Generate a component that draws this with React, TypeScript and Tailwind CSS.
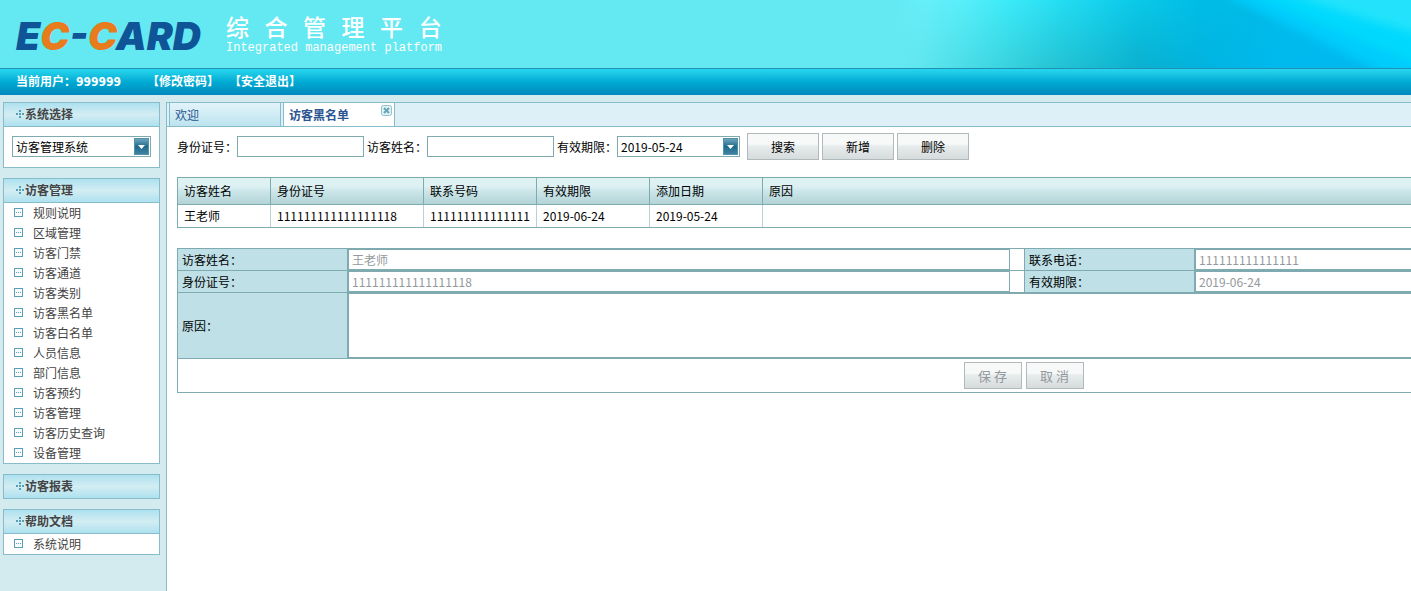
import { useState } from 'react'

const visitorMenu = [
  '规则说明',
  '区域管理',
  '访客门禁',
  '访客通道',
  '访客类别',
  '访客黑名单',
  '访客白名单',
  '人员信息',
  '部门信息',
  '访客预约',
  '访客管理',
  '访客历史查询',
  '设备管理',
]

const columns = [
  { title: '访客姓名', width: 'w-[93px]' },
  { title: '身份证号', width: 'w-[153px]' },
  { title: '联系号码', width: 'w-[113px]' },
  { title: '有效期限', width: 'w-[113px]' },
  { title: '添加日期', width: 'w-[113px]' },
  { title: '原因', width: '' },
]

const rows = [['王老师', '111111111111111118', '111111111111111', '2019-06-24', '2019-05-24', '']]

function HeaderArt() {
  return (
    <svg
      className="absolute top-0 right-0 h-full w-[521px]"
      viewBox="0 0 521 68"
      preserveAspectRatio="none"
      aria-hidden="true"
    >
      <defs>
        <linearGradient id="sky">
          <stop offset="0" stopColor="#64e9f2" />
          <stop offset="0.07" stopColor="#66effa" />
          <stop offset="0.14" stopColor="#58effa" />
          <stop offset="0.22" stopColor="#3eebf9" />
          <stop offset="0.34" stopColor="#22dcf2" />
          <stop offset="0.46" stopColor="#0ccbea" />
          <stop offset="0.6" stopColor="#00bde5" />
          <stop offset="0.7" stopColor="#00bbe8" />
          <stop offset="1" stopColor="#00c4f6" />
        </linearGradient>
        <linearGradient id="sea">
          <stop offset="0" stopColor="#64e9f2" />
          <stop offset="0.05" stopColor="#62e6ee" />
          <stop offset="0.18" stopColor="#42d8e2" />
          <stop offset="0.32" stopColor="#25c3d3" />
          <stop offset="0.48" stopColor="#0bb0ce" />
          <stop offset="0.62" stopColor="#00b4e2" />
          <stop offset="0.75" stopColor="#00b9ee" />
          <stop offset="1" stopColor="#00b8ee" />
        </linearGradient>
        <linearGradient id="fade" x2="0" y2="1">
          <stop offset="0" stopColor="#000" />
          <stop offset="1" stopColor="#fff" />
        </linearGradient>
        <mask id="lower">
          <rect width="521" height="68" fill="url(#fade)" />
        </mask>
        <filter id="soft" x="-20%" y="-40%" width="140%" height="180%" colorInterpolationFilters="sRGB">
          <feGaussianBlur stdDeviation="5" />
        </filter>
      </defs>
      <rect width="521" height="68" fill="url(#sky)" />
      <rect width="521" height="68" fill="url(#sea)" mask="url(#lower)" />
      <g filter="url(#soft)">
        <path d="M320-12 Q400 26 480 66 L560 100 V-12Z" fill="#00ccfb" />
        <path d="M350-12 Q430 26 560 76 V-12Z" fill="#00d9fd" />
        <path d="M385-12 Q450 14 560 42 V-12Z" fill="#22e3fb" />
      </g>
    </svg>
  )
}

function PanelTitle({ children }: { children: string }) {
  return (
    <h2 className="flex h-[23px] items-center gap-px bg-linear-to-b from-[#ade1ef] via-[#d3edf3] to-[#ade1ef] pb-px pl-[11px] font-bold text-[#444]">
      <svg width="9" height="9" viewBox="0 0 9 9" fill="#569fb4" shapeRendering="crispEdges" aria-hidden="true">
        <path d="M4 0h2v2H4zM4 3h2v2H4zM4 6h2v2H4zM1 3h2v2H1zM7 3h2v2H7z" />
      </svg>
      {children}
    </h2>
  )
}

function MenuItem({ children }: { children: string }) {
  return (
    <li>
      <a href="#" className="flex h-5 items-center gap-[10px] pb-px pl-[10px] text-[#444]">
        <svg width="9" height="9" viewBox="0 0 9 9" shapeRendering="crispEdges" aria-hidden="true">
          <path d="M0 0h9v9H0zM1 1v7h7V1z" fill="#569fb4" fillRule="evenodd" />
          <path d="M2 4h1v1H2zM4 4h1v1H4zM6 4h1v1H6z" fill="#569fb4" />
        </svg>
        {children}
      </a>
    </li>
  )
}

function DropDown({ label, options, className }: { label: string; options: string[]; className: string }) {
  return (
    <div className={`relative h-[21px] ${className}`}>
      <select
        aria-label={label}
        className="h-full w-full appearance-none border border-[#7faab0] bg-white pl-[3px] text-black outline-none"
      >
        {options.map((option) => (
          <option key={option}>{option}</option>
        ))}
      </select>
      <span className="pointer-events-none absolute top-[2px] right-[2px] flex h-[17px] w-[15px] items-center justify-center border border-[#5691aa] bg-linear-to-b from-[#6ca5bc] via-[#1f6a8c] via-50% to-[#3d83a2]">
        <svg width="7" height="4" viewBox="0 0 7 4" fill="#fff" aria-hidden="true">
          <path d="M0 0h7L3.500 4z" />
        </svg>
      </span>
    </div>
  )
}

function Button({ children, className, disabled }: { children: string; className: string; disabled?: boolean }) {
  return (
    <button
      disabled={disabled}
      className={`h-[27px] border border-[#b0babd] bg-linear-to-b from-[#f7f9f9] from-40% via-[#e6ebeb] via-50% to-[#d6dbdc] text-xs text-black disabled:text-[13px] disabled:text-[#93999c] ${className}`}
    >
      {children}
    </button>
  )
}

function Field({ id, label, value }: { id: string; label: string; value: string }) {
  return (
    <div className="flex h-[22px] border-b border-l border-[#7faab0]">
      <label htmlFor={id} className="flex w-[170px] items-center border-r border-[#7faab0] bg-[#bfe0e6] pl-1">
        {label}
      </label>
      <input
        id={id}
        disabled
        defaultValue={value}
        className="mr-[14px] h-[21px] min-w-0 flex-1 border border-[#7faab0] bg-white px-[3px] text-[#93999c]"
      />
    </div>
  )
}

export default function App() {
  const [idNumber, setIdNumber] = useState('')
  const [name, setName] = useState('')

  return (
    <div className="flex min-h-screen flex-col overflow-hidden bg-[#d3ebef] font-['Noto_Sans_CJK_SC',sans-serif] text-xs leading-4 text-black">
      {/* Banner */}
      <header className="relative flex h-[68px] items-center bg-[#64e9f2] pt-1 pl-4">
        <HeaderArt />
        <div className="relative w-[210px] font-['Inter','Liberation_Sans',sans-serif] text-[39px] leading-10 font-black text-[#0f5497] italic">
          E<span className="text-[#e87b1c]">C</span>-<span className="text-[#e87b1c]">C</span>ARD
        </div>
        <div className="relative mb-1 text-white">
          <h1 className="pb-1 text-[23px] leading-6 font-medium whitespace-pre">综   合   管   理   平   台</h1>
          <p className="font-['Liberation_Mono',monospace] text-xs leading-3">Integrated management platform</p>
        </div>
      </header>

      {/* User bar */}
      <nav className="flex h-[27px] items-center border-t border-[#1f8fb8] bg-linear-to-b from-[#26d7ee] via-[#00abd3] via-50% to-[#0088bd] pl-4 font-['DejaVu_Sans_Condensed','Noto_Sans_CJK_SC',sans-serif] font-bold text-white">
        <span className="mr-[26px]">当前用户：999999</span>
        <a href="#" className="mr-[10px]">【修改密码】</a>
        <a href="#">【安全退出】</a>
      </nav>

      <div className="flex flex-1 pt-[7px]">
        {/* Sidebar */}
        <aside className="flex w-[166px] shrink-0 flex-col gap-[10px] pr-[6px] pl-[3px]">
          <section className="border border-[#89bccb] bg-white">
            <PanelTitle>系统选择</PanelTitle>
            <div className="border-t border-[#89bccb] px-2 pt-[9px] pb-[10px]">
              <DropDown label="系统选择" options={['访客管理系统']} className="w-[139px]" />
            </div>
          </section>
          <section className="border border-[#89bccb] bg-white">
            <PanelTitle>访客管理</PanelTitle>
            <ul className="border-t border-[#89bccb]">
              {visitorMenu.map((item) => (
                <MenuItem key={item}>{item}</MenuItem>
              ))}
            </ul>
          </section>
          <section className="border border-[#89bccb] bg-white">
            <PanelTitle>访客报表</PanelTitle>
          </section>
          <section className="border border-[#89bccb] bg-white">
            <PanelTitle>帮助文档</PanelTitle>
            <ul className="border-t border-[#89bccb]">
              <MenuItem>系统说明</MenuItem>
            </ul>
          </section>
        </aside>

        <main className="min-w-0 flex-1 overflow-hidden border-l border-[#89bccb] bg-white">
          {/* Tabs */}
          <div className="flex h-[25px] gap-[2px] border-y border-[#89bccb] bg-[#ddf0f7] pl-[2px] text-[#2a5590]">
            <button className="flex w-28 items-center border-x border-[#89bccb] bg-linear-to-b from-[#e3f4f9] to-[#bce4ef] pt-px pl-[5px]">
              欢迎
            </button>
            <div className="flex w-28 items-start justify-between border-x border-[#89bccb] bg-white pt-[2px] pr-[2px] pl-[5px]">
              <button className="pt-[2px] font-bold">访客黑名单</button>
              <button aria-label="关闭">
                <svg width="11" height="11" viewBox="0 0 11 11" fill="none" aria-hidden="true">
                  <rect x="0.500" y="0.500" width="10" height="10" rx="2" fill="#dff2f5" stroke="#8fc3c9" />
                  <path d="M3 3l5 5M8 3l-5 5" stroke="#6ba3b8" strokeWidth="2" />
                </svg>
              </button>
            </div>
          </div>

          <div className="pl-[10px]">
            {/* Search */}
            <form className="mt-[6px] flex h-[27px] items-center">
              <label htmlFor="q-id">身份证号：</label>
              <input
                id="q-id"
                value={idNumber}
                onChange={(e) => setIdNumber(e.target.value)}
                className="mr-[3px] h-[21px] w-[127px] border border-[#7faab0] px-[3px] outline-none"
              />
              <label htmlFor="q-name">访客姓名：</label>
              <input
                id="q-name"
                value={name}
                onChange={(e) => setName(e.target.value)}
                className="mr-[3px] h-[21px] w-[127px] border border-[#7faab0] px-[3px] outline-none"
              />
              <span>有效期限：</span>
              <DropDown label="有效期限" options={['2019-05-24']} className="mr-[7px] w-[123px]" />
              <div className="flex gap-[3px]">
                <Button className="w-[72px]">搜索</Button>
                <Button className="w-[72px]">新增</Button>
                <Button className="w-[72px]">删除</Button>
              </div>
            </form>

            {/* Blacklist */}
            <div className="mt-[17px] min-w-[1694px] border border-[#7faab0]">
              <table className="w-full table-fixed border-separate border-spacing-0 text-left">
                <thead>
                  <tr className="h-[27px] bg-linear-to-b from-[#def1f3] from-30% via-[#cbe6e9] via-50% to-[#b1d2d6]">
                    {columns.map((column) => (
                      <th
                        key={column.title}
                        className={`border-r border-b border-[#7faab0] px-[6px] py-0 font-normal last:border-r-0 ${column.width}`}
                      >
                        {column.title}
                      </th>
                    ))}
                  </tr>
                </thead>
                <tbody>
                  {rows.map((row) => (
                    <tr key={row[1]} className="h-[22px]">
                      {row.map((cell, i) => (
                        <td key={i} className="border-r border-[#bdd0d6] px-[6px] py-0 whitespace-nowrap last:border-r-0">
                          {cell}
                        </td>
                      ))}
                    </tr>
                  ))}
                </tbody>
              </table>
            </div>

            {/* Detail */}
            <form className="mt-5 min-w-[1694px] border-t border-[#7faab0]">
              <div className="grid grid-cols-2">
                <Field id="d-name" label="访客姓名：" value="王老师" />
                <Field id="d-phone" label="联系电话：" value="111111111111111" />
                <Field id="d-id" label="身份证号：" value="111111111111111118" />
                <Field id="d-date" label="有效期限：" value="2019-06-24" />
              </div>
              <div className="flex h-[66px] border-b border-l border-[#7faab0]">
                <label htmlFor="d-reason" className="flex w-[170px] items-center border-r border-[#7faab0] bg-[#bfe0e6] pl-1">
                  原因：
                </label>
                <textarea id="d-reason" disabled className="h-[65px] flex-1 resize-none border border-[#7faab0] bg-white" />
              </div>
              <div className="flex h-[34px] items-center justify-center gap-1 border-b border-l border-[#7faab0] pr-[2px]">
                <Button disabled className="w-[58px]">保 存</Button>
                <Button disabled className="w-[58px]">取 消</Button>
              </div>
            </form>
          </div>
        </main>
      </div>
    </div>
  )
}
